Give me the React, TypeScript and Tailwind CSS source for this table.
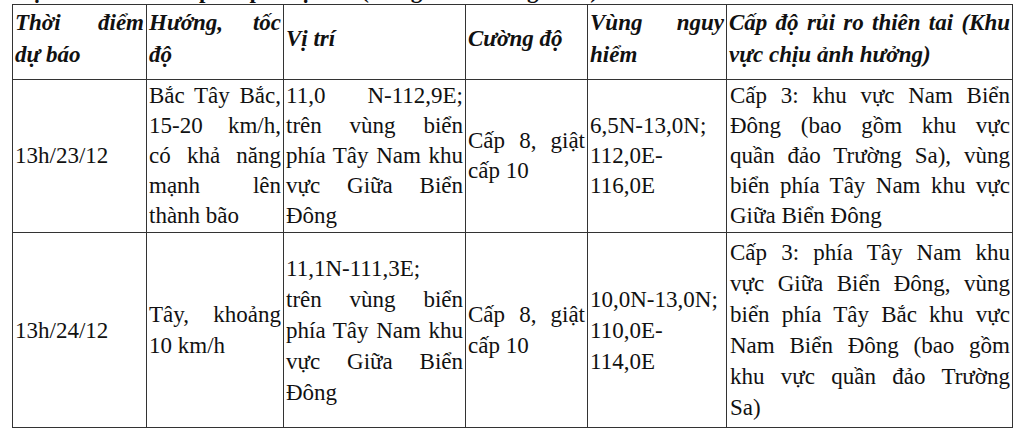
import React from "react";

type Line = { t: string; j?: boolean };

// j = justified line (spread to the cell edges), otherwise left aligned
const L = (t: string, j = false): Line => ({ t, j });

interface Row {
  time: string;
  dir: Line[];
  pos: Line[];
  level: Line[];
  zone: Line[];
  risk: Line[];
  h: string;
  lead: string;
}

const rows: Row[] = [
  {
    time: "13h/23/12",
    dir: [L("Bắc Tây Bắc,", true), L("15-20 km/h,", true), L("có khả năng", true), L("mạnh lên", true), L("thành bão")],
    pos: [L("11,0 N-112,9E;", true), L("trên vùng biển", true), L("phía Tây Nam khu", true), L("vực Giữa Biển", true), L("Đông")],
    level: [L("Cấp 8, giật", true), L("cấp 10")],
    zone: [L("6,5N-13,0N;"), L("112,0E-"), L("116,0E")],
    risk: [
      L("Cấp 3: khu vực Nam Biển", true),
      L("Đông (bao gồm khu vực", true),
      L("quần đảo Trường Sa), vùng", true),
      L("biển phía Tây Nam khu vực", true),
      L("Giữa Biển Đông"),
    ],
    h: "h-[153px]",
    lead: "leading-[30px]",
  },
  {
    time: "13h/24/12",
    dir: [L("Tây, khoảng", true), L("10 km/h")],
    pos: [L("11,1N-111,3E;"), L("trên vùng biển", true), L("phía Tây Nam khu", true), L("vực Giữa Biển", true), L("Đông")],
    level: [L("Cấp 8, giật", true), L("cấp 10")],
    zone: [L("10,0N-13,0N;"), L("110,0E-"), L("114,0E")],
    risk: [
      L("Cấp 3: phía Tây Nam khu", true),
      L("vực Giữa Biển Đông, vùng", true),
      L("biển phía Tây Bắc khu vực", true),
      L("Nam Biển Đông (bao gồm", true),
      L("khu vực quần đảo Trường", true),
      L("Sa)"),
    ],
    h: "h-[195px]",
    lead: "leading-[31px]",
  },
];

const Lines = ({ lines }: { lines: Line[] }) => (
  <>
    {lines.map((l, i) => (
      <div key={i} className={l.j ? "text-justify [text-align-last:justify]" : "text-left"}>
        {l.t}
      </div>
    ))}
  </>
);

const cell = "border border-[#333] align-middle px-[2px] py-0";
const head = `${cell} pb-[7px] font-bold italic leading-[32px]`;

export default function App() {
  return (
    <div className="w-[1026px] h-[433px] bg-white overflow-hidden text-[#111] font-[Liberation_Serif,Times_New_Roman,serif] text-[23px]">
      {/* title line above the table, only its bottom edge is in frame */}
      <div className="h-[4px] overflow-hidden pl-[14px]">
        <div className="-mt-[21px] leading-[23px] font-bold whitespace-nowrap">
          Dự báo diễn biến áp thấp nhiệt đới (trong 24 đến 48 giờ tới)
        </div>
      </div>

      <table className="ml-[12px] w-[1000px] table-fixed border-collapse">
        <colgroup>
          <col className="w-[134px]" />
          <col className="w-[137px]" />
          <col className="w-[182px]" />
          <col className="w-[122px]" />
          <col className="w-[139px]" />
          <col className="w-[286px]" />
        </colgroup>
        <thead>
          <tr className="h-[75px]">
            <th className={head}>
              <Lines lines={[L("Thời điểm", true), L("dự báo")]} />
            </th>
            <th className={head}>
              <Lines lines={[L("Hướng, tốc", true), L("độ")]} />
            </th>
            <th className={head}>
              <Lines lines={[L("Vị trí")]} />
            </th>
            <th className={head}>
              <Lines lines={[L("Cường độ")]} />
            </th>
            <th className={head}>
              <Lines lines={[L("Vùng nguy", true), L("hiểm")]} />
            </th>
            <th className={head}>
              <Lines lines={[L("Cấp độ rủi ro thiên tai (Khu", true), L("vực chịu ảnh hưởng)")]} />
            </th>
          </tr>
        </thead>
        <tbody>
          {rows.map((r) => (
            <tr key={r.time} className={`${r.h} ${r.lead}`}>
              <td className={cell}>{r.time}</td>
              <td className={cell}>
                <Lines lines={r.dir} />
              </td>
              <td className={cell}>
                <Lines lines={r.pos} />
              </td>
              <td className={cell}>
                <Lines lines={r.level} />
              </td>
              <td className={cell}>
                <Lines lines={r.zone} />
              </td>
              <td className={`${cell} pl-[3px]`}>
                <Lines lines={r.risk} />
              </td>
            </tr>
          ))}
        </tbody>
      </table>
    </div>
  );
}
